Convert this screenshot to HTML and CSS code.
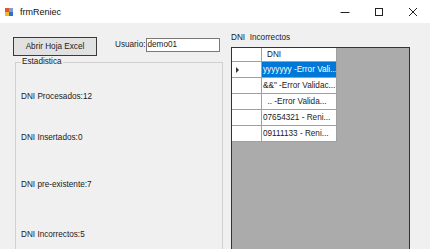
FILE: index.html
```html
<!DOCTYPE html>
<html>
<head>
<meta charset="utf-8">
<title>frmReniec</title>
<link rel="stylesheet" href="styles.css">
</head>
<body>
<div class="window">
  <div class="titlebar">
    <svg class="appicon" width="8" height="8" viewBox="0 0 8 8">
      <rect x="0" y="0" width="4" height="4" fill="#e2542b"/>
      <rect x="4" y="0" width="4" height="4" fill="#7d9fcf"/>
      <rect x="0" y="4" width="4" height="4" fill="#f2b632"/>
      <rect x="4" y="4" width="4" height="4" fill="#2f6fc4"/>
    </svg>
    <span class="title">frmReniec</span>
    <div class="controls">
      <div class="ctl"><svg width="10" height="10" viewBox="0 0 10 10"><line x1="0.5" y1="5.5" x2="9.5" y2="5.5" stroke="#222" stroke-width="1"/></svg></div>
      <div class="ctl"><svg width="10" height="10" viewBox="0 0 10 10"><rect x="1.5" y="1.5" width="7" height="7" fill="none" stroke="#222" stroke-width="1"/></svg></div>
      <div class="ctl"><svg width="10" height="10" viewBox="0 0 10 10"><path d="M1 1 L9 9 M9 1 L1 9" stroke="#222" stroke-width="1"/></svg></div>
    </div>
  </div>
  <div class="client">
    <div class="left">
      <div class="toprow">
        <button class="btn">Abrir Hoja Excel</button>
        <span class="lbl-user">Usuario:</span>
        <div class="textbox">demo01</div>
      </div>
      <fieldset class="group">
        <legend>Estadistica</legend>
        <div class="stat s1">DNI Procesados:12</div>
        <div class="stat s2">DNI Insertados:0</div>
        <div class="stat s3">DNI pre-existente:7</div>
        <div class="stat s4">DNI Incorrectos:5</div>
      </fieldset>
    </div>
    <div class="right">
      <div class="grid-label">DNI&nbsp; Incorrectos</div>
      <div class="dgv">
        <div class="dgv-table">
          <div class="hc corner"></div><div class="hc col">DNI</div>
          <div class="rh cur"><svg width="3" height="6" viewBox="0 0 3 6"><polygon points="0,0 3,3 0,6" fill="#333"/></svg></div><div class="cell sel">yyyyyyy -Error Vali...</div>
          <div class="rh"></div><div class="cell">&amp;&amp;" -Error Validac...</div>
          <div class="rh"></div><div class="cell pre">  .. -Error Valida...</div>
          <div class="rh"></div><div class="cell">07654321 - Reni...</div>
          <div class="rh"></div><div class="cell">09111133 - Reni...</div>
        </div>
      </div>
    </div>
  </div>
</div>
</body>
</html>
```
FILE: styles.css
```css
* { box-sizing: border-box; }
html, body { margin: 0; padding: 0; }
body {
  width: 430px;
  height: 249px;
  overflow: hidden;
  background: #f0f0f0;
  font-family: "Liberation Sans", Arial, sans-serif;
  font-size: 8.2px;
  color: #1a1a1a;
}
.window { width: 430px; height: 249px; display: flex; flex-direction: column; }

.titlebar {
  height: 23px;
  background: #fff;
  display: flex;
  align-items: center;
  flex: none;
}
.appicon { margin-left: 5px; display: block; }
.title { margin-left: 7px; font-size: 9px; line-height: 12px; color: #111; }
.controls { margin-left: auto; display: flex; height: 23px; }
.ctl { width: 34px; height: 23px; display: flex; align-items: center; justify-content: center; }
.ctl svg { display: block; }

.client { display: flex; flex: 1; overflow: hidden; }
.left { width: 210px; margin-left: 13px; padding-top: 14px; flex: none; }
.toprow { display: flex; align-items: flex-start; height: 19px; }
.btn {
  width: 84px;
  height: 19px;
  border: 1px solid #3a3a3a;
  background: #e1e1e1;
  font-family: inherit;
  font-size: 8.2px;
  color: #1a1a1a;
  padding: 0;
  margin: 0;
}
.lbl-user { margin-left: 18px; margin-top: 1px; line-height: 14px; }
.textbox {
  width: 74px;
  height: 14px;
  margin-top: 1px;
  border: 1px solid #7a7a7a;
  background: #fff;
  padding-left: 1px;
  line-height: 12px;
}

.group {
  margin: 1px 0 0 2px;
  width: 208px;
  height: 260px;
  border: 1px solid #d0d0d0;
  padding: 0 0 0 5px;
}
.group legend { padding: 0 1px; line-height: 10px; font-size: 8.2px; }
.stat { line-height: 10px; }
.s1 { margin-top: 25px; }
.s2 { margin-top: 31px; }
.s3 { margin-top: 37px; }
.s4 { margin-top: 40px; }

.right { margin-left: 8px; padding-top: 10px; flex: none; }
.grid-label { line-height: 10px; }
.dgv {
  margin-top: 4px;
  width: 179px;
  height: 220px;
  border: 1px solid #333;
  background: #ababab;
}
.dgv-table {
  display: grid;
  grid-template-columns: 30px 75px;
  grid-template-rows: 14px repeat(5, 16px);
}
.hc, .rh, .cell {
  background: #fff;
  border-right: 1px solid #a0a0a0;
  border-bottom: 1px solid #a0a0a0;
  line-height: 14px;
  white-space: nowrap;
  overflow: hidden;
}
.hc { line-height: 13px; }
.col { padding-left: 5px; }
.rh { display: flex; align-items: center; padding-left: 4px; }
.rh svg { display: block; }
.cell { padding-left: 1px; line-height: 15px; }
.sel { background: #0078d7; color: #fff; }
.pre { white-space: pre; }
```
